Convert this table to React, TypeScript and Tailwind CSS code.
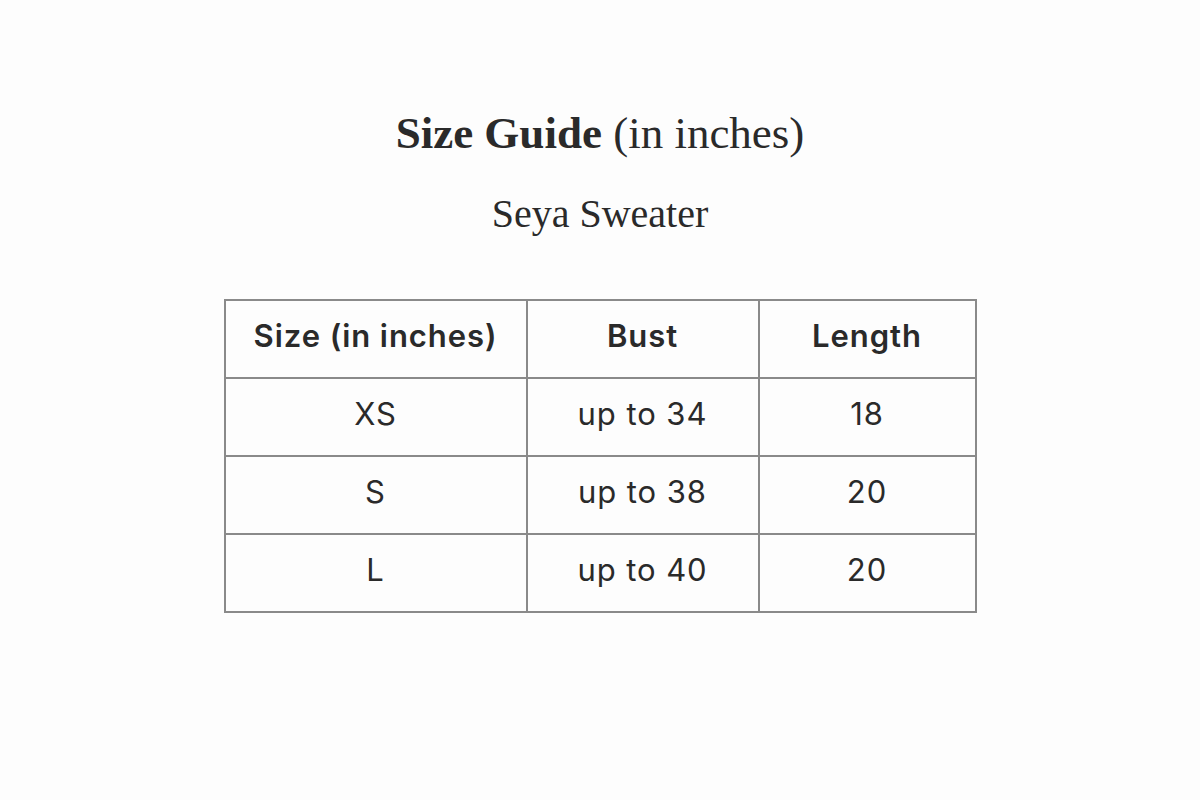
const rows = [
  ["XS", "up to 34", "18"],
  ["S", "up to 38", "20"],
  ["L", "up to 40", "20"],
];

export default function App() {
  return (
    <div className="flex h-[800px] w-[1200px] flex-col items-center bg-[#fdfdfd] text-[#2a2a2a]">
      <h1 className="mt-[105px] font-['Liberation_Serif',serif] text-[45px] leading-[56px]">
        <span className="font-bold">Size Guide</span> (in inches)
      </h1>
      <p className="mt-[29px] font-['Liberation_Serif',serif] text-[40px] leading-[48px]">
        Seya Sweater
      </p>
      <table className="mt-[61px] border-collapse font-['Inter',sans-serif] text-[31px] tracking-[0.03em]">
        <thead>
          <tr className="h-[78px]">
            <th className="w-[302px] border-2 border-[#8a8a8a] pb-[5px] font-semibold">Size (in inches)</th>
            <th className="w-[232px] border-2 border-[#8a8a8a] pb-[5px] font-semibold">Bust</th>
            <th className="w-[217px] border-2 border-[#8a8a8a] pb-[5px] font-semibold">Length</th>
          </tr>
        </thead>
        <tbody>
          {rows.map((r) => (
            <tr key={r[0]} className="h-[78px]">
              {r.map((c, i) => (
                <td key={i} className="border-2 border-[#8a8a8a] pb-[5px] text-center font-normal">
                  {c}
                </td>
              ))}
            </tr>
          ))}
        </tbody>
      </table>
    </div>
  );
}
